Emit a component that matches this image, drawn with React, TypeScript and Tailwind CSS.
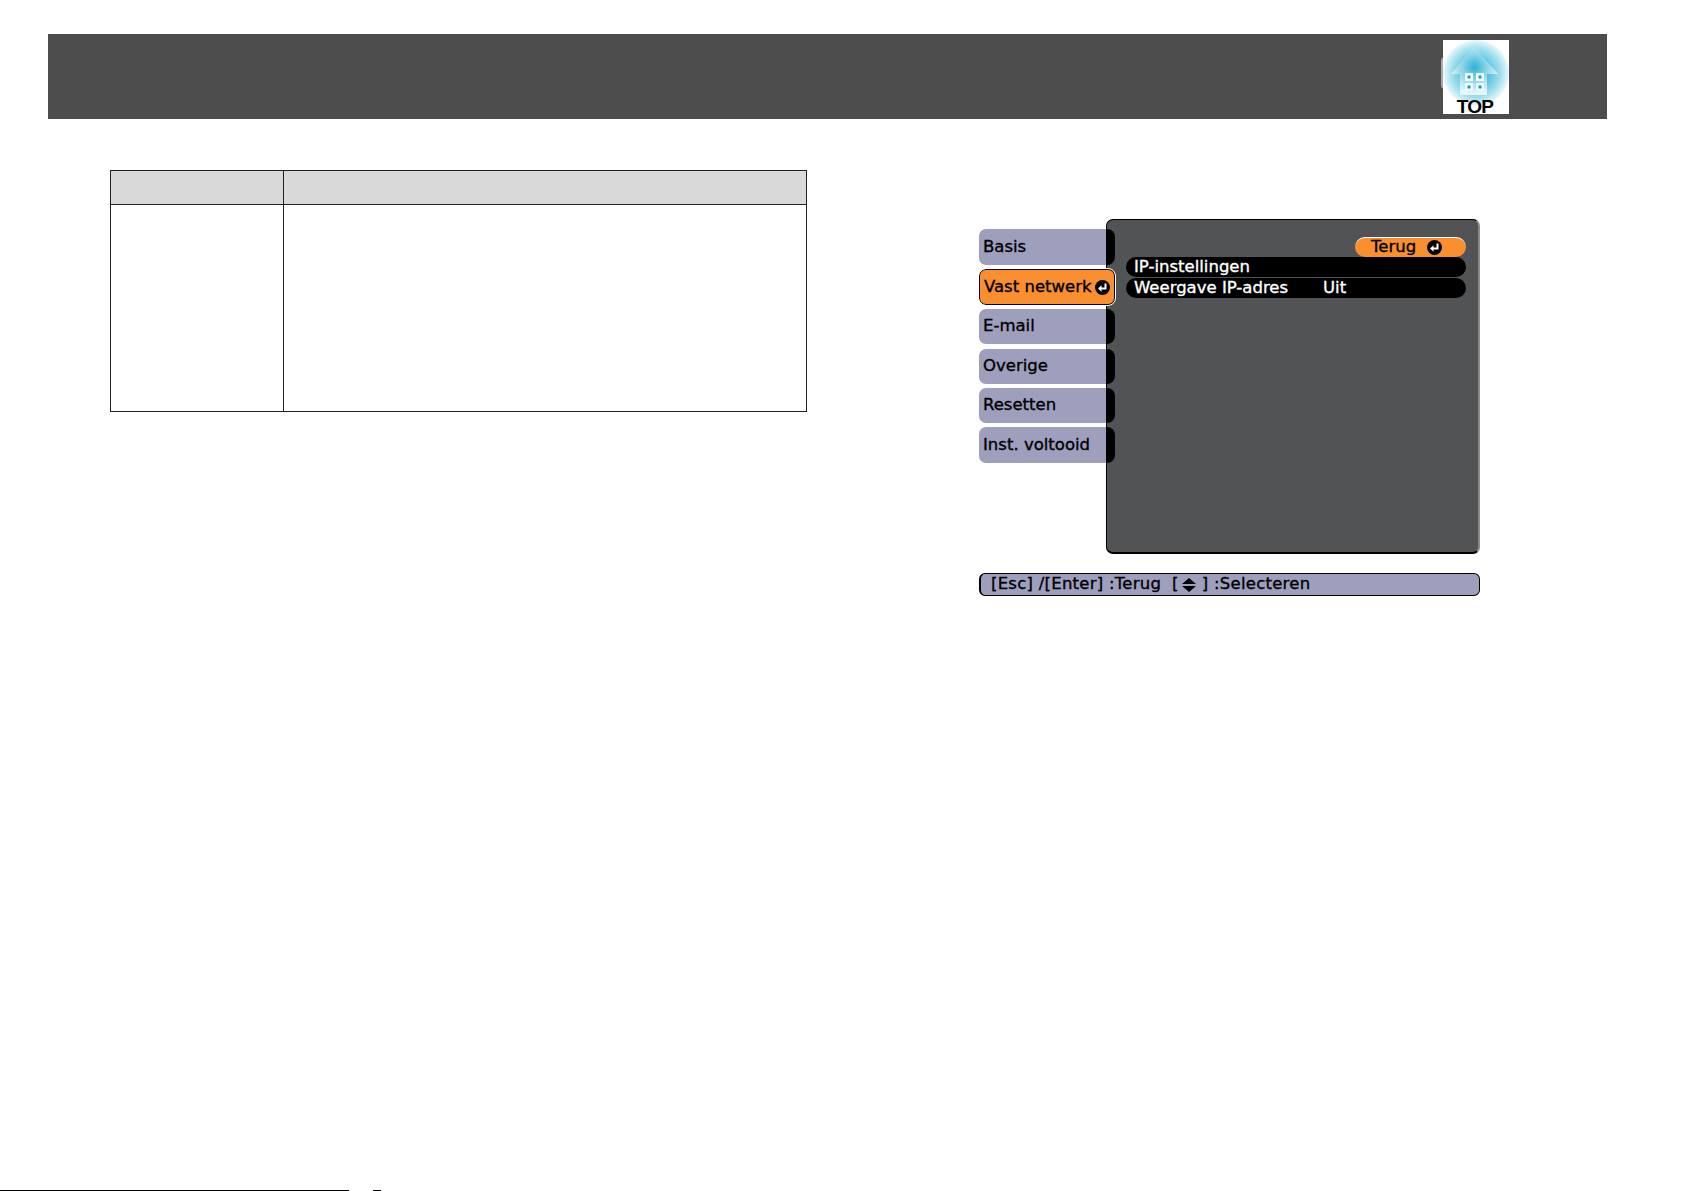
import React from 'react'

const tabs = [
    { label: 'Basis', h: 'h-[36px]', mt: 'mt-0' },
    { label: 'Vast netwerk', h: 'h-[36px]', mt: 'mt-[4px]', active: true },
    { label: 'E-mail', h: 'h-[35px]', mt: 'mt-[4px]' },
    { label: 'Overige', h: 'h-[35px]', mt: 'mt-[5px]' },
    { label: 'Resetten', h: 'h-[35px]', mt: 'mt-[4px]' },
    { label: 'Inst. voltooid', h: 'h-[36px]', mt: 'mt-[4px]' },
]

const EnterIcon = () => (
    <svg width="15" height="15" viewBox="0 0 15 15" className="shrink-0">
        <circle cx="7.5" cy="7.5" r="7.5" fill="#000" />
        <path d="M10.5 3.5V8.5H5" fill="none" stroke="#fff" strokeWidth="2" />
        <path d="M6.5 5.2L3 8.5L6.5 11.8Z" fill="#fff" />
    </svg>
)

const TopLogo = () => (
    <div className="relative w-[66px] h-[74px] mt-[6px]">
        <div className="absolute left-[-2px] top-[17px] w-[4px] h-[32px] rounded-l-full bg-[#a8a8a8]" />
        <svg width="66" height="74" viewBox="0 0 66 74" className="relative block overflow-visible">
            <defs>
                <radialGradient id="glow" cx="50%" cy="50%" r="50%">
                    <stop offset="0%" stopColor="#0fa6cf" />
                    <stop offset="35%" stopColor="#4fbedc" />
                    <stop offset="75%" stopColor="#a4e0ee" />
                    <stop offset="100%" stopColor="#e9f9fc" />
                </radialGradient>
                <radialGradient id="house" cx="50%" cy="42%" r="55%">
                    <stop offset="0%" stopColor="#2bb2d6" />
                    <stop offset="45%" stopColor="#86d3e7" />
                    <stop offset="100%" stopColor="#e4f6fa" />
                </radialGradient>
            </defs>
            <rect width="66" height="74" fill="#fff" />
            <circle cx="33" cy="33" r="33" fill="url(#glow)" />
            <path d="M31 7L55 34H44V55H17V34H8Z" fill="url(#house)" />
            <g fill="#eefafc">
                <rect x="22" y="33" width="8" height="8" />
                <rect x="33" y="33" width="8" height="8" />
                <rect x="22" y="43" width="8" height="8" />
                <rect x="33" y="43" width="8" height="8" />
            </g>
            <g fill="#1a9cc4">
                <circle cx="26" cy="37" r="1.7" />
                <circle cx="37" cy="37" r="1.7" />
                <circle cx="26" cy="47" r="1.7" />
                <circle cx="37" cy="47" r="1.7" />
            </g>
            <text x="32" y="73" textAnchor="middle" fontFamily="Liberation Sans, sans-serif" fontWeight="700" fontSize="19" letterSpacing="-0.8" fill="#000">TOP</text>
        </svg>
    </div>
)

export default function App() {
    return (
        <div className="w-[1685px] h-[1191px] bg-white flex flex-col pt-[34px] overflow-hidden font-['DejaVu_Sans',sans-serif]">
            {/* Header */}
            <div className="ml-[48px] w-[1559px] h-[85px] bg-[#4d4d4d] flex pl-[1395px] shrink-0">
                <TopLogo />
            </div>

            <div className="flex items-start pl-[110px] pt-[51px]">
                {/* Empty table */}
                <table className="w-[697px] h-[242px] table-fixed border-collapse">
                    <colgroup>
                        <col className="w-[173px]" />
                        <col />
                    </colgroup>
                    <thead>
                        <tr className="h-[34px] bg-[#d9d9d9]">
                            <th className="border border-[#231f20]" />
                            <th className="border border-[#231f20]" />
                        </tr>
                    </thead>
                    <tbody>
                        <tr>
                            <td className="border border-[#231f20]" />
                            <td className="border border-[#231f20]" />
                        </tr>
                    </tbody>
                </table>

                {/* Projector menu */}
                <div className="ml-[172px] mt-[49px] w-[501px] [-webkit-text-stroke-width:0.35px] text-[16.5px]">
                    <div className="flex items-start h-[335px]">
                        <div className="relative z-10 w-[136px] pt-[10px] shrink-0">
                            {tabs.map((t) => (
                                <div key={t.label} className={`flex ${t.h} ${t.mt} text-black whitespace-nowrap`}>
                                    {t.active ? (
                                        <div className="w-[136px] flex items-center justify-between pl-[4px] pr-[4px] bg-[#f98f2f] rounded-[7px] border border-black outline outline-white">
                                            <span>{t.label}</span>
                                            <EnterIcon />
                                        </div>
                                    ) : (
                                        <>
                                            <div className="w-[127px] flex items-center pl-[4px] bg-[#9e9ebd] rounded-l-[7px]">{t.label}</div>
                                            <div className="w-[9px] bg-black rounded-r-[8px]" />
                                        </>
                                    )}
                                </div>
                            ))}
                        </div>
                        <div className="-ml-[9px] w-[374px] h-[335px] bg-[#525355] rounded-[7px] border border-black border-r-[#8a8a8a] border-b-2 border-r-2 pt-[17px] pl-[19px] pr-[12px]">
                            <div className="flex justify-end">
                                <div className="w-[111px] h-[20px] bg-[#f98f2f] rounded-full border-t border-white flex items-center pl-[16px] gap-[11px] text-black">
                                    <span>Terug</span>
                                    <EnterIcon />
                                </div>
                            </div>
                            <div className="h-[20px] bg-black rounded-full flex items-center pl-[8px] text-white">IP-instellingen</div>
                            <div className="mt-[1px] h-[20px] bg-black rounded-full flex items-center pl-[8px] text-white">
                                <span className="w-[189px]">Weergave IP-adres</span>
                                <span>Uit</span>
                            </div>
                        </div>
                    </div>

                    {/* Key hints */}
                    <div className="mt-[19px] h-[23px] bg-[#9e9ebd] rounded-[6px] border border-black border-l-2 flex items-center pl-[10px] text-black tracking-[0.25px] whitespace-pre">
                        <span>[Esc] /[Enter] :Terug  [</span>
                        <svg width="16" height="16" viewBox="0 0 16 16" className="mx-[2px]">
                            <path d="M8 1L15 7H1Z" fill="#000" />
                            <path d="M8 15L15 9H1Z" fill="#000" />
                        </svg>
                        <span className="pl-[3px]">] :Selecteren</span>
                    </div>
                </div>
            </div>

            {/* Bottom edge of the next page */}
            <div className="mt-auto flex h-[1px] shrink-0">
                <div className="w-[349px] bg-black" />
                <div className="ml-[24px] w-[8px] bg-black" />
            </div>
        </div>
    )
}
